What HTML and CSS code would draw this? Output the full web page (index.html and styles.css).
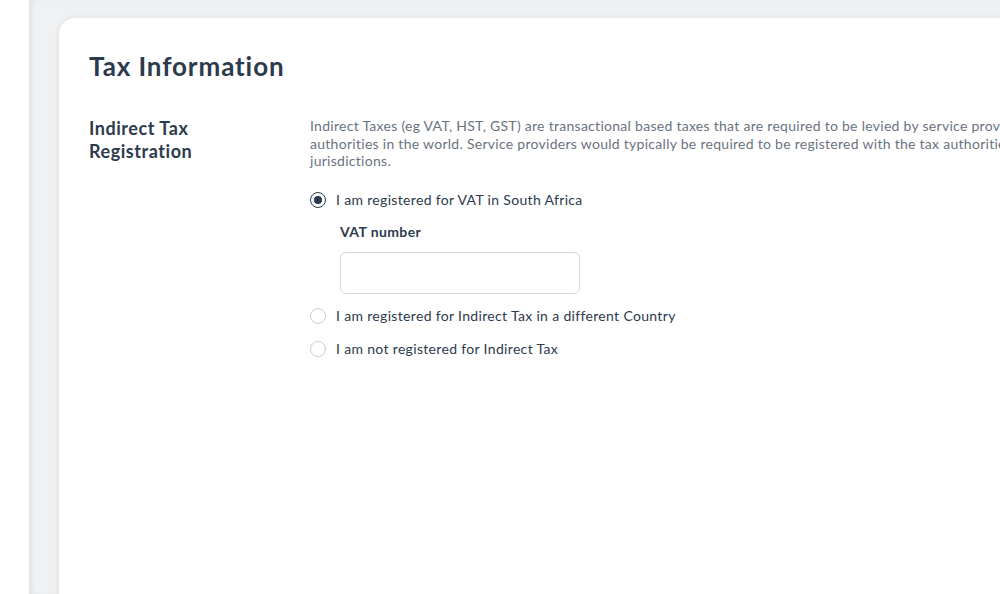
FILE: index.html
```html
<!DOCTYPE html>
<html lang="en">
<head>
<meta charset="utf-8">
<title>Tax Information</title>
<link rel="stylesheet" href="styles.css">
</head>
<body>
<div class="layout">
  <aside class="sidebar"></aside>
  <main class="main">
    <section class="card">
      <h1 class="title">Tax Information</h1>
      <div class="row">
        <h2 class="row-label">Indirect Tax<br>Registration</h2>
        <div class="row-body">
          <p class="desc">Indirect Taxes (eg VAT, HST, GST) are transactional based taxes that are required to be levied by service providers by tax authorities in the world. Service providers would typically be required to be registered with the tax authorities in those jurisdictions.</p>
          <label class="option">
            <span class="radio checked"></span>
            <span class="option-text">I am registered for VAT in South Africa</span>
          </label>
          <div class="field">
            <div class="field-label">VAT number</div>
            <div class="input"></div>
          </div>
          <label class="option">
            <span class="radio"></span>
            <span class="option-text">I am registered for Indirect Tax in a different Country</span>
          </label>
          <label class="option">
            <span class="radio"></span>
            <span class="option-text">I am not registered for Indirect Tax</span>
          </label>
        </div>
      </div>
    </section>
  </main>
</div>
</body>
</html>
```
FILE: styles.css
```css
html, body {
  margin: 0;
  padding: 0;
}
body {
  font-family: "Lato", "Noto Sans", sans-serif;
  color: #2c3a4d;
  background: #ffffff;
}
.layout {
  display: flex;
  width: 1000px;
  height: 594px;
  overflow: hidden;
}
.sidebar {
  flex: 0 0 29px;
  background: #ffffff;
  position: relative;
  z-index: 1;
}
.main {
  flex: 1;
  background: #f0f1f3;
  padding: 18px 0 0 30px;
  overflow: hidden;
  box-shadow: inset 5px 0 6px -3px rgba(0, 0, 0, 0.08);
}
.card {
  width: 1100px;
  min-height: 700px;
  background: #ffffff;
  border-radius: 16px 0 0 0;
  box-shadow: 0 0 6px rgba(0, 0, 0, 0.08);
  padding: 29px 30px 0 30px;
  box-sizing: border-box;
}
.title {
  margin: 0;
  font-size: 26px;
  line-height: 38px;
  font-weight: 700;
  letter-spacing: 0.9px;
  color: #2c3a4d;
}
.row {
  display: flex;
  margin-top: 32px;
}
.row-label {
  flex: 0 0 221px;
  margin: 0;
  font-size: 18px;
  line-height: 23px;
  font-weight: 700;
  letter-spacing: 0.55px;
  color: #2c3a4d;
}
.row-body {
  flex: 0 0 780px;
}
.desc {
  margin: 0;
  font-size: 14px;
  line-height: 17.5px;
  letter-spacing: 0.28px;
  color: #6b7380;
}
.option {
  display: flex;
  align-items: center;
  gap: 10px;
  height: 20px;
  font-size: 14px;
  letter-spacing: 0.33px;
  color: #2c3a4d;
}
.desc + .option {
  margin-top: 20px;
}
.option + .option {
  margin-top: 13px;
}
.radio {
  flex: 0 0 16px;
  width: 16px;
  height: 16px;
  box-sizing: border-box;
  border: 1px solid #c9cdd3;
  border-radius: 50%;
  display: flex;
  align-items: center;
  justify-content: center;
}
.radio.checked {
  border: 1.5px solid #2c3a4d;
}
.radio.checked::after {
  content: "";
  width: 8px;
  height: 8px;
  border-radius: 50%;
  background: #2c3a4d;
}
.field {
  padding-left: 30px;
  margin-top: 14px;
  margin-bottom: 12px;
}
.field-label {
  font-size: 14px;
  line-height: 16px;
  font-weight: 700;
  letter-spacing: 0.4px;
  color: #2c3a4d;
}
.input {
  margin-top: 12px;
  width: 240px;
  height: 42px;
  box-sizing: border-box;
  border: 1px solid #d3d7dc;
  border-radius: 6px;
  background: #ffffff;
}
```
